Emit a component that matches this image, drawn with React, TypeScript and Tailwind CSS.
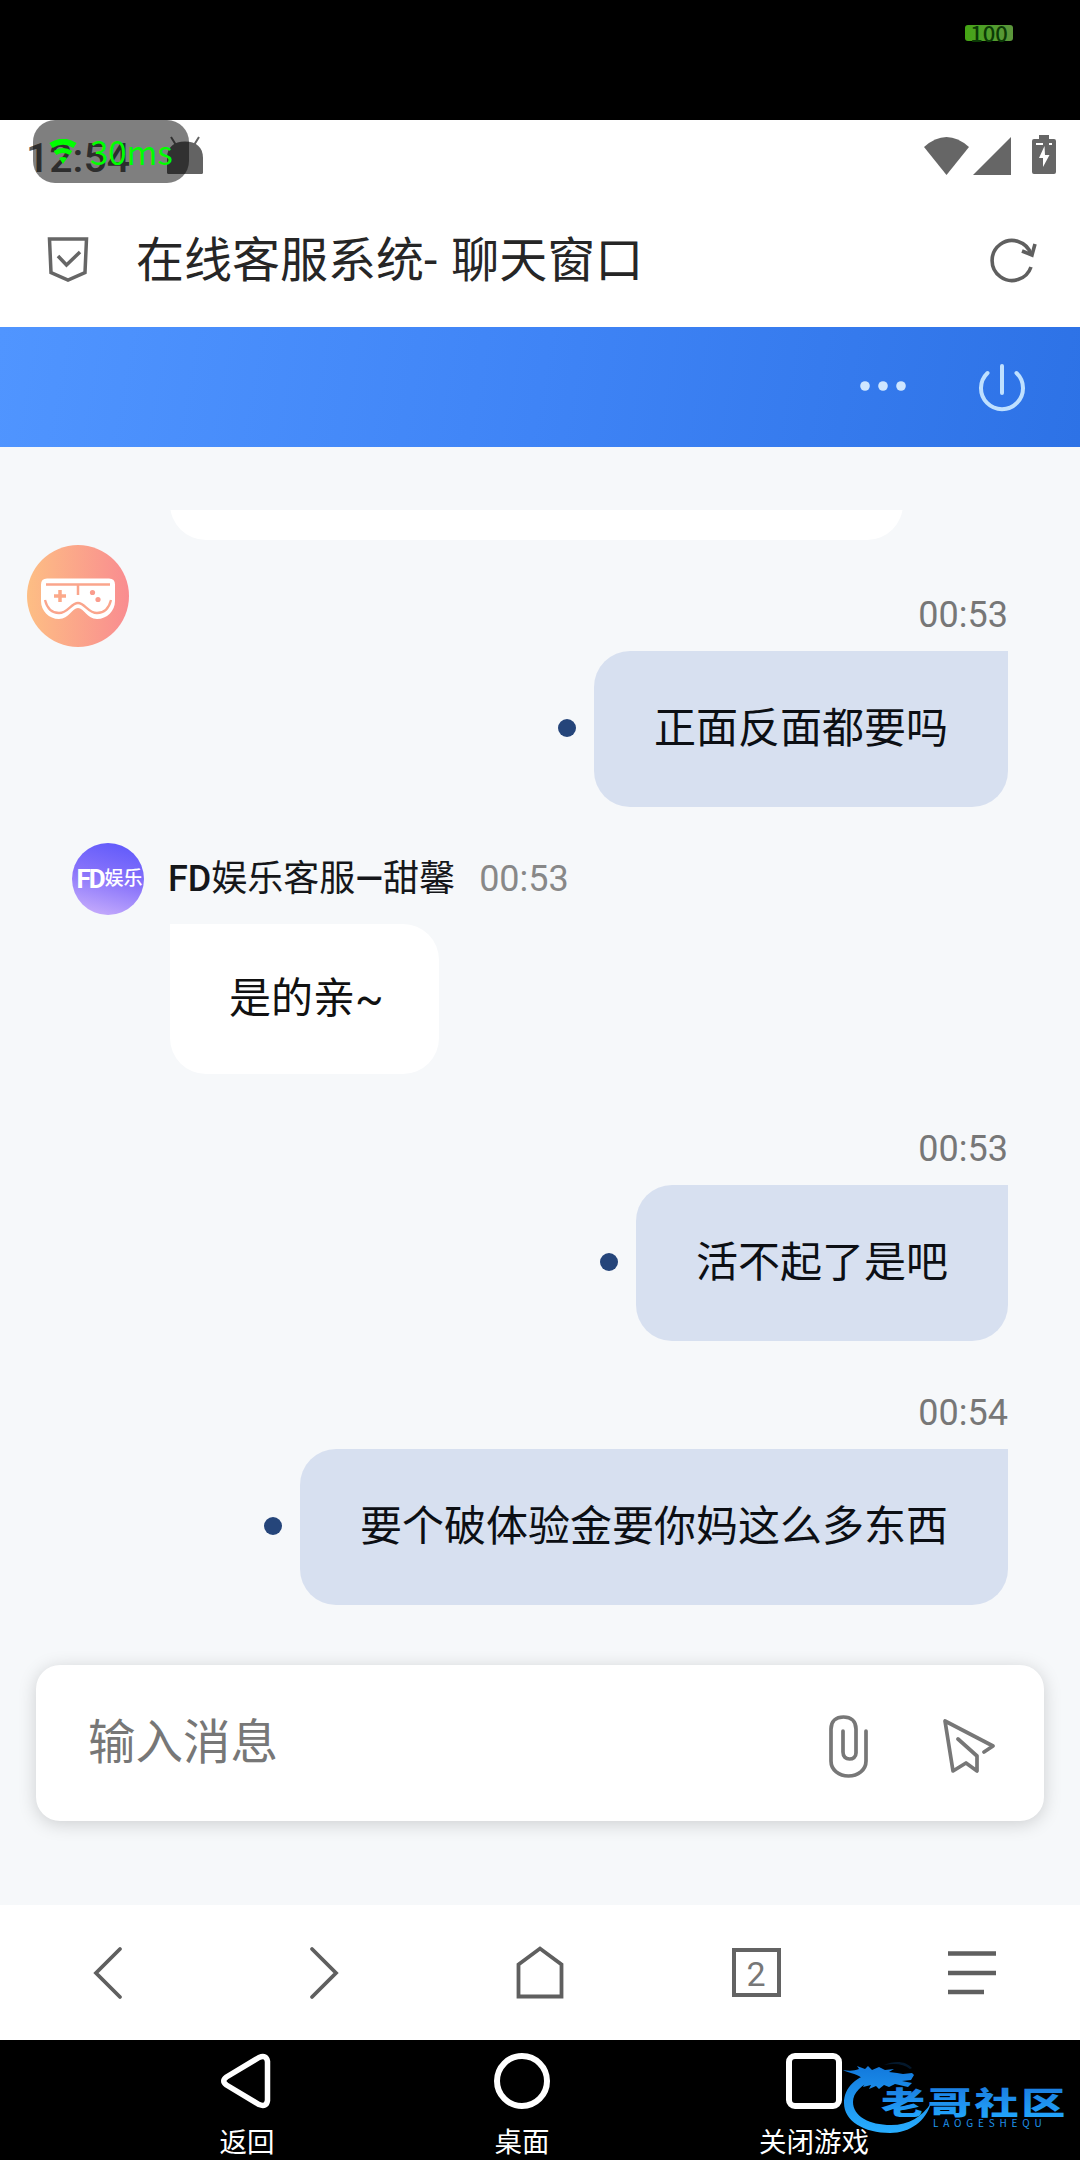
import React from 'react'

type Outgoing = { time: string; text: string }

const SentMessage: React.FC<{ message: Outgoing }> = ({ message }) => (
  <div className="flex flex-col items-end">
    <span className="h-[42px] text-[36px] leading-[42px] text-[#777]">{message.time}</span>
    <div className="mt-[15px] flex items-center gap-[18px]">
      <span className="mb-[3px] h-[18px] w-[18px] rounded-full bg-[#25457a]" />
      <div className="flex h-[156px] items-center rounded-[36px] rounded-tr-none bg-[#d7e0f0] px-[60px] pb-[2px] text-[42px] text-[#0c0f14]">
        {message.text}
      </div>
    </div>
  </div>
)

const StatusBar: React.FC = () => (
  <div className="relative flex h-[70px] items-start justify-between bg-white">
    <div className="flex items-start pl-[26px]">
      <span className="pt-[15px] text-[41px] leading-[47px] font-medium text-[#5a5a5a]">12:54</span>
      <svg className="mt-[15px] ml-[36px]" width="38" height="40" viewBox="0 0 38 40">
        <path d="M1 37.500V23C1 12 8 6.500 19 6.500S37 12 37 23v14.500q0 1.500-1.500 1.500h-33Q1 39 1 37.500z" fill="#636363" />
        <path d="M5 2l5 8M33 2l-5 8" stroke="#636363" strokeWidth="2" />
      </svg>
    </div>
    <div className="flex items-start pt-[15px] pr-6">
      <svg width="45" height="40" viewBox="0 0 45 40">
        <path d="M0 12Q22.500-8 45 12L22.500 40z" fill="#666" />
      </svg>
      <svg className="ml-[4px]" width="38" height="40" viewBox="0 0 38 40">
        <path d="M0 40L38 2v38z" fill="#666" />
      </svg>
      <svg className="ml-[21px]" width="24" height="40" viewBox="0 0 24 40">
        <path d="M7 0h10v4h5q2 0 2 2v31q0 2-2 2H2q-2 0-2-2V6q0-2 2-2h5z" fill="#666" />
        <path d="M4 9h7M17 9h3" stroke="#fff" strokeWidth="2" />
        <path d="M12.500 11L7 23h4v9l6.500-12H13z" fill="#fff" />
      </svg>
    </div>
    {/* network latency overlay */}
    <div className="absolute top-0 left-[33px] flex h-[63px] w-[156px] items-center rounded-[22px] bg-black/50 pl-[16px]">
      <svg width="28" height="26" viewBox="0 0 28 26" fill="none" stroke="#0f0">
        <path d="M2 6.500Q14-1 26 6.500" strokeWidth="6" />
        <path d="M6 14q8-5 16 0" strokeWidth="5" />
        <path d="M10 19q4-2 8 0l-4 6z" fill="#0f0" stroke="none" />
      </svg>
      <span className="ml-[13px] font-['Noto_Sans_CJK_SC'] text-[33px] leading-none text-[#00ff00]">30ms</span>
    </div>
  </div>
)

const BrowserTitle: React.FC = () => (
  <div className="flex h-[137px] items-center bg-white">
    <svg className="mt-px ml-[47px]" width="42" height="46" viewBox="0 0 42 46" fill="none" stroke="#666" strokeWidth="3.500">
      <path d="M2.500 3h37l-1.500 33.500L21 44 4 36.500z" />
      <path d="M11 20l8.500 9L33 16" />
    </svg>
    <h1 className="ml-[47px] pt-[5px] text-[48px] leading-none text-[#262626] [word-spacing:2px]">在线客服系统- 聊天窗口</h1>
    <svg className="mt-[2px] mr-[42px] ml-auto" width="48" height="48" viewBox="0 0 48 48" fill="none" stroke="#5f5f5f" strokeWidth="3.600">
      <path d="M41 31A20 20 0 1 1 41 18" />
      <path d="M32 15l10 4 3-11" />
    </svg>
  </div>
)

const ChatHeader: React.FC = () => (
  <div className="flex h-[120px] items-center justify-end bg-linear-100 from-[#5095ff] via-[#3f84f6] to-[#2d72e6] pr-[53px]">
    <svg className="mb-[3px]" width="48" height="12" viewBox="0 0 48 12" fill="#cfe6ff">
      <circle cx="6" cy="6" r="4.800" />
      <circle cx="24" cy="6" r="4.800" />
      <circle cx="42" cy="6" r="4.800" />
    </svg>
    <svg className="mb-px ml-[70px]" width="50" height="50" viewBox="0 0 50 50" fill="none" stroke="#bfe0ff" strokeWidth="4" strokeLinecap="round">
      <path d="M10.500 11a21 21 0 1 0 29 0" />
      <path d="M25 4v27" />
    </svg>
  </div>
)

const GameAvatar: React.FC = () => (
  <svg width="102" height="102" viewBox="0 0 102 102" fill="none">
    <defs>
      <linearGradient id="peach" x1="0" x2="1">
        <stop stopColor="#fdbe84" />
        <stop offset="1" stopColor="#f98c90" />
      </linearGradient>
    </defs>
    <circle cx="51" cy="51" r="51" fill="url(#peach)" />
    <path d="M20 33.500h62q6 0 6 6V56c0 10-8 18-18 18-10 0-13-11-19-11s-9 11-19 11c-10 0-18-8-18-18V39.500q0-6 6-6z" fill="#fff" />
    <path d="M19 39.500h64M51 40v10" stroke="#faa58c" strokeWidth="2.500" />
    <path d="M18 55c2 8 7 13 14 13 9 0 12-10 19-10s10 10 19 10c7 0 12-5 14-13" stroke="#faa58c" strokeWidth="2.300" />
    <path d="M33 45v12M27 51h12" stroke="#fba98a" strokeWidth="3.500" />
    <circle cx="65.500" cy="47.500" r="2.600" fill="#fa9c8d" />
    <circle cx="71" cy="54.500" r="2.600" fill="#fa9c8d" />
  </svg>
)

const AgentAvatar: React.FC = () => (
  <div className="flex h-[72px] w-[72px] items-center justify-center overflow-hidden rounded-full bg-linear-195 from-[#5b55fb] via-[#8a74fa] to-[#cfb2fb] pl-[3px] whitespace-nowrap text-white">
    <span className="text-[26px] font-bold tracking-[-2px]">FD</span>
    <span className="ml-px text-[19px] font-medium">娱乐</span>
  </div>
)

const InputBar: React.FC = () => (
  <div className="mx-9 flex h-[156px] items-center rounded-[24px] bg-white pr-[48px] pl-[52px] shadow-[0_3px_18px_rgba(0,0,0,0.17)]">
    <span className="flex-1 pt-[2px] text-[47.500px] leading-none text-[#777]">输入消息</span>
    <svg className="mt-[6px]" width="42" height="64" viewBox="0 0 42 64" fill="none" stroke="#777" strokeWidth="3.700" strokeLinecap="round">
      <path d="M39 17v30c0 9-8 15-17.500 15S4 56 4 47V15C4 7 9 3 16.500 3S29 7 29 15v24c0 4-3 6-6.500 6S16 43 16 38V17" />
    </svg>
    <svg className="mt-[6px] ml-[73px]" width="54" height="54" viewBox="0 0 54 54" fill="none" stroke="#777" strokeWidth="3.700" strokeLinecap="round" strokeLinejoin="round">
      <path d="M42 33l9-6L3 2l8 50 13-8 11 8V37L16 20" />
    </svg>
  </div>
)

const BrowserNav: React.FC = () => (
  <nav className="grid h-[135px] grid-cols-5 place-items-center bg-white">
    <svg width="54" height="54" viewBox="0 0 54 54" fill="none" stroke="#5f5f5f" strokeWidth="3.800">
      <path d="M39 3L15 27l24 24" strokeLinecap="round" />
    </svg>
    <svg width="54" height="54" viewBox="0 0 54 54" fill="none" stroke="#5f5f5f" strokeWidth="3.800">
      <path d="M15 3l24 24-24 24" strokeLinecap="round" />
    </svg>
    <svg width="54" height="54" viewBox="0 0 54 54" fill="none" stroke="#5f5f5f" strokeWidth="3.800">
      <path d="M5.500 18.500L27 2.500l21.500 16v32h-43z" />
    </svg>
    <div className="flex h-[49px] w-[49px] items-center justify-center border-4 border-[#636363] pt-[2px] text-[34px] leading-none text-[#777]">
      2
    </div>
    <svg width="48" height="54" viewBox="0 0 48 54" stroke="#5f5f5f" strokeWidth="4.300">
      <path d="M0 7.500h48M0 27h48M0 46h36" />
    </svg>
  </nav>
)

const SystemNav: React.FC = () => (
  <div className="relative flex h-[120px] bg-black pt-[13px] pl-[207px] font-['Noto_Sans_CJK_SC',sans-serif] text-[27.500px] leading-[30px] text-white">
    <div className="flex w-[80px] flex-col items-center gap-[16px]">
      <svg width="56" height="56" viewBox="0 0 56 56" fill="none" stroke="#fff" strokeWidth="5.500">
        <path d="M40 4.500L7.500 24q-5.500 4 0 8L40 51.500q7.500 3 8.500-4v-39q-1-7-8.500-4z" />
      </svg>
      返回
    </div>
    <div className="ml-[195px] flex w-[80px] flex-col items-center gap-[16px]">
      <div className="h-[56px] w-[56px] rounded-full border-[6px] border-white" />
      桌面
    </div>
    <div className="ml-[192px] flex w-[120px] flex-col items-center gap-[16px]">
      <div className="h-[56px] w-[56px] rounded-[9px] border-[6px] border-white" />
      关闭游戏
    </div>
    <svg className="absolute top-[20px] left-[840px]" width="230" height="80" viewBox="0 0 230 80">
      <defs>
        <linearGradient id="sky" gradientUnits="userSpaceOnUse" x1="0" x2="0" y1="5" y2="73">
          <stop stopColor="#1278dc" />
          <stop offset="1" stopColor="#28aeff" />
        </linearGradient>
        <linearGradient id="word" x1="0" x2="0" y1="0" y2="1">
          <stop stopColor="#1a72d8" />
          <stop offset="1" stopColor="#22aaff" />
        </linearGradient>
      </defs>
      <g fill="url(#sky)">
        {/* body */}
        <path d="M36 13C16 15 4 28 4 43c0 18 20 30 46 30 20 0 36-12 41-30-9 14-22 22-40 22-22 0-38-9-38-23 0-9 8-18 23-22z" />
        {/* head, horns and whiskers */}
        <path d="M3 10c6 1 11 1 16-1l-2-3 8 3 3-3 4 4 7-3 6 3 9-1-5 3 8 1 6 1 9-1 2 2-3 5-9 1 10 2-4 4-13-3-6 3-5-2-5 4-3-3-7 3 2-4-8 2 3-6-4-3C15 13 8 13 3 10z" />
        <path d="M44 5C55 0 66 1 72 8l-2 1C64 4 55 3 44 5z" opacity=".2" />
      </g>
      <g fill="url(#word)" fontFamily="'Noto Sans CJK SC', sans-serif">
        <text transform="translate(41 53.500) scale(1.420 1)" fontSize="31" fontWeight="900" letterSpacing="1.900">
          老哥社区
        </text>
        <text x="93" y="66.500" fontSize="10" letterSpacing="4.800">
          LAOGESHEQU
        </text>
      </g>
    </svg>
  </div>
)

const App: React.FC = () => {
  return (
    <div className="flex h-[2160px] w-[1080px] flex-col overflow-hidden bg-[#f6f8fa] font-[Roboto,'Noto_Sans_CJK_SC',sans-serif]">
      <div className="flex h-[120px] shrink-0 justify-end bg-black pt-[25px] pr-[67px]">
        <div className="flex h-4 w-12 items-center justify-center rounded-[3px] bg-linear-to-r from-[#44a512] to-[#5b963b] pb-[2px] font-['Noto_Sans_CJK_SC'] text-[22px] leading-none font-medium text-[#0b3a05]">
          100
        </div>
      </div>
      <StatusBar />
      <BrowserTitle />
      <ChatHeader />

      <main className="flex h-[1218px] flex-col pt-[63px]">
        {/* tail of the previous message, cut off by the scroll area */}
        <div className="ml-[170px] h-[30px] w-[733px] overflow-hidden">
          <div className="-mt-[20px] h-[50px] rounded-b-[36px] bg-white" />
        </div>
        <div className="mt-[5px] ml-[27px] h-[50px]">
          <GameAvatar />
        </div>
        <div className="-mt-[1px] pr-[72px]">
          <SentMessage message={{ time: '00:53', text: '正面反面都要吗' }} />
        </div>

        <div className="mt-[36px] flex items-center pl-[72px]">
          <AgentAvatar />
          <span className="ml-[24px] text-[36px] leading-none text-[#15171a]">
            <b className="font-medium">FD</b>娱乐客服<b className="font-medium">—</b>甜馨
          </span>
          <span className="ml-[24px] text-[36px] leading-none text-[#888]">00:53</span>
        </div>
        <div className="mt-[9px] ml-[170px] flex h-[150px] w-[269px] shrink-0 items-center rounded-[36px] rounded-tl-none bg-white pb-[2px] pl-[59px] text-[42px] text-[#111]">
          是的亲~
        </div>

        <div className="mt-[54px] flex flex-col gap-[51px] pr-[72px]">
          <SentMessage message={{ time: '00:53', text: '活不起了是吧' }} />
          <SentMessage message={{ time: '00:54', text: '要个破体验金要你妈这么多东西' }} />
        </div>
      </main>

      <InputBar />
      <div className="h-[84px] shrink-0" />
      <BrowserNav />
      <SystemNav />
    </div>
  )
}

export default App
